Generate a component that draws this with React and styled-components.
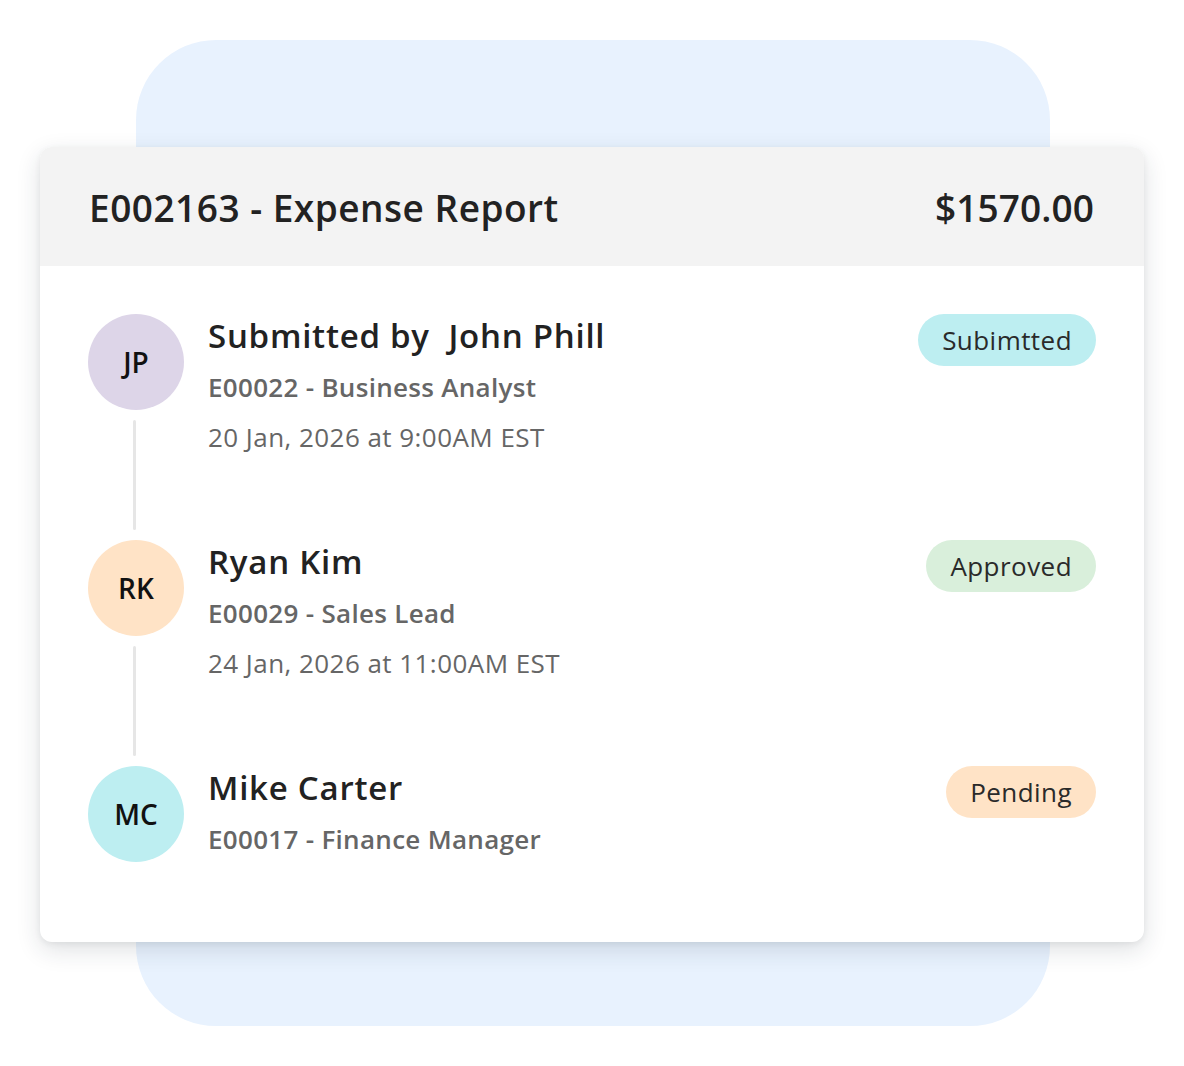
import React from "react";
import styled, { createGlobalStyle } from "styled-components";

const Global = createGlobalStyle`
  html, body { margin: 0; padding: 0; background: #ffffff; }
  body { font-family: "Open Sans", "Noto Sans", sans-serif; color: #222; }
`;

const Stage = styled.div`
  width: 1184px;
  height: 1066px;
  box-sizing: border-box;
  padding: 40px 0 40px 0;
  display: flex;
  justify-content: center;
  position: relative;
`;

const Backdrop = styled.div`
  width: 914px;
  height: 986px;
  margin-left: 2px;
  border-radius: 80px;
  background: #e8f2fe;
  position: relative;
`;

const Card = styled.section`
  position: absolute;
  left: 40px;
  top: 147px;
  width: 1104px;
  height: 795px;
  background: #ffffff;
  border-radius: 12px;
  overflow: hidden;
  box-shadow: 0 8px 24px rgba(30, 40, 60, 0.14), 0 2px 6px rgba(0, 0, 0, 0.06);
  display: flex;
  flex-direction: column;
`;

const Header = styled.header`
  flex-shrink: 0;
  height: 119px;
  box-sizing: border-box;
  background: #f3f3f3;
  display: flex;
  align-items: center;
  justify-content: space-between;
  padding: 2px 50px 0 49px;
`;

const Title = styled.h1`
  margin: 0;
  font-size: 37px;
  font-weight: 600;
  color: #222;
  letter-spacing: 0.5px;
`;

const Amount = styled.div`
  font-size: 37px;
  font-weight: 600;
  color: #222;
  letter-spacing: 0.1px;
`;

const Timeline = styled.div`
  padding: 48px 48px 80px 48px;
  display: flex;
  flex-direction: column;
`;

const Row = styled.div`
  display: flex;
  align-items: flex-start;
`;

const Rail = styled.div`
  width: 96px;
  display: flex;
  flex-direction: column;
  align-items: center;
  flex-shrink: 0;
`;

const Avatar = styled.div`
  width: 96px;
  height: 96px;
  border-radius: 50%;
  background: ${(p) => p.$bg};
  display: flex;
  align-items: center;
  justify-content: center;
  font-size: 28px;
  font-weight: 600;
  color: #111;
`;

const Connector = styled.div`
  width: 3px;
  height: 110px;
  margin: 10px 0;
  margin-left: -3px;
  border-radius: 2px;
  background: #e6e6e6;
`;

const Info = styled.div`
  flex: 1;
  padding-left: 24px;
  display: flex;
  flex-direction: column;
`;

const Name = styled.div`
  font-size: 33px;
  font-weight: 600;
  color: #222;
  line-height: 44px;
  letter-spacing: 0.75px;
  white-space: pre;
`;

const Role = styled.div`
  margin-top: 4px;
  font-size: 26px;
  font-weight: 600;
  color: #666;
  line-height: 50px;
  letter-spacing: 0.3px;
`;

const When = styled.div`
  font-size: 26px;
  font-weight: 400;
  color: #666;
  line-height: 50px;
  letter-spacing: 0.45px;
`;

const Badge = styled.span`
  height: 52px;
  box-sizing: border-box;
  padding: 0 24px;
  border-radius: 26px;
  background: ${(p) => p.$bg};
  display: inline-flex;
  align-items: center;
  font-size: 26px;
  color: #2a2a2a;
  letter-spacing: 0.45px;
  flex-shrink: 0;
`;

const steps = [
  {
    initials: "JP",
    avatar: "#ddd5e8",
    name: "Submitted by  John Phill",
    role: "E00022 - Business Analyst",
    when: "20 Jan, 2026 at 9:00AM EST",
    status: "Subimtted",
    badge: "#bdeef1",
  },
  {
    initials: "RK",
    avatar: "#ffe3c6",
    name: "Ryan Kim",
    role: "E00029 - Sales Lead",
    when: "24 Jan, 2026 at 11:00AM EST",
    status: "Approved",
    badge: "#d9efdb",
  },
  {
    initials: "MC",
    avatar: "#bdeef1",
    name: "Mike Carter",
    role: "E00017 - Finance Manager",
    when: null,
    status: "Pending",
    badge: "#ffe3c6",
  },
];

export default function App() {
  return (
    <>
      <Global />
      <Stage>
        <Backdrop />
        <Card>
          <Header>
            <Title>E002163 - Expense Report</Title>
            <Amount>$1570.00</Amount>
          </Header>
          <Timeline>
            {steps.map((s, i) => (
              <Row key={s.initials}>
                <Rail>
                  <Avatar $bg={s.avatar}>{s.initials}</Avatar>
                  {i < steps.length - 1 && <Connector />}
                </Rail>
                <Info>
                  <Name>{s.name}</Name>
                  <Role>{s.role}</Role>
                  {s.when && <When>{s.when}</When>}
                </Info>
                <Badge $bg={s.badge}>{s.status}</Badge>
              </Row>
            ))}
          </Timeline>
        </Card>
      </Stage>
    </>
  );
}
